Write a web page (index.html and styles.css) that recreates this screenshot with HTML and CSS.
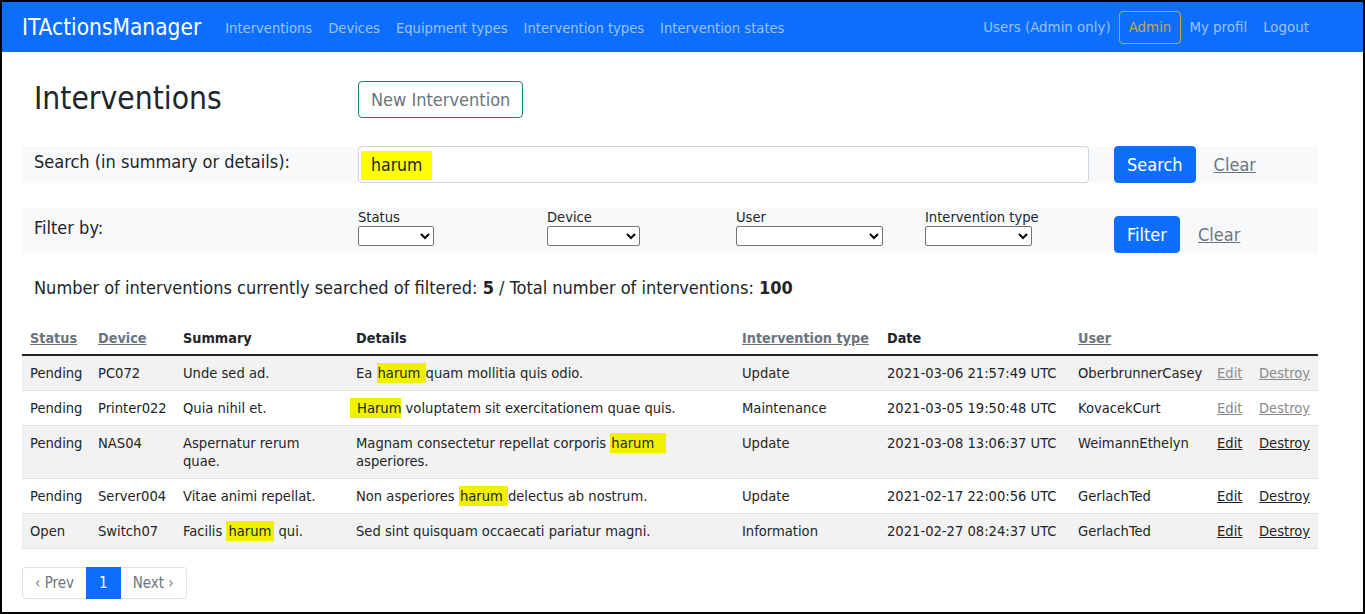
FILE: index.html
```html
<!DOCTYPE html>
<html lang="en">
<head>
<meta charset="utf-8">
<title>ITActionsManager</title>
<link rel="stylesheet" href="styles.css">
</head>
<body>
<div class="frame">
  <nav class="navbar">
    <a class="brand" href="#">ITActionsManager</a>
    <ul class="nav nav-left">
      <li><a href="#">Interventions</a></li>
      <li><a href="#">Devices</a></li>
      <li><a href="#">Equipment types</a></li>
      <li><a href="#">Intervention types</a></li>
      <li><a href="#">Intervention states</a></li>
    </ul>
    <ul class="nav nav-right">
      <li><a href="#">Users (Admin only)</a></li>
      <li><a class="admin" href="#">Admin</a></li>
      <li><a href="#">My profil</a></li>
      <li><a href="#">Logout</a></li>
    </ul>
  </nav>

  <main class="container">
    <div class="title-row">
      <h1 class="title">Interventions</h1>
      <a class="btn btn-outline-success" href="#">New Intervention</a>
    </div>

    <form class="panel search-panel">
      <div class="panel-label">Search (in summary or details):</div>
      <div class="search-field"><div class="form-control"><mark class="hl-input">harum</mark></div></div>
      <div class="actions"><button type="button" class="btn btn-primary">Search</button><a class="clear" href="#">Clear</a></div>
    </form>

    <form class="panel filter-panel">
      <div class="panel-label filter-label">Filter by:</div>
      <div class="field"><label>Status</label><select class="sel sel-status"><option></option></select></div>
      <div class="field"><label>Device</label><select class="sel sel-device"><option></option></select></div>
      <div class="field"><label>User</label><select class="sel sel-user"><option></option></select></div>
      <div class="field"><label>Intervention type</label><select class="sel sel-type"><option></option></select></div>
      <div class="actions filter-actions"><button type="button" class="btn btn-primary">Filter</button><a class="clear" href="#">Clear</a></div>
    </form>

    <p class="count">Number of interventions currently searched of filtered: <b>5</b> / Total number of interventions: <b>100</b></p>

    <table class="table">
      <colgroup>
        <col class="c-status"><col class="c-device"><col class="c-summary"><col class="c-details"><col class="c-type"><col class="c-date"><col class="c-user"><col class="c-edit"><col class="c-destroy">
      </colgroup>
      <thead>
        <tr>
          <th><a class="sort" href="#">Status</a></th>
          <th><a class="sort" href="#">Device</a></th>
          <th>Summary</th>
          <th>Details</th>
          <th><a class="sort" href="#">Intervention type</a></th>
          <th>Date</th>
          <th><a class="sort" href="#">User</a></th>
          <th></th>
          <th></th>
        </tr>
      </thead>
      <tbody>
        <tr class="odd">
          <td>Pending</td><td>PC072</td><td>Unde sed ad.</td>
          <td>Ea <mark class="hl">harum </mark>quam mollitia quis odio.</td>
          <td>Update</td><td>2021-03-06 21:57:49 UTC</td><td>OberbrunnerCasey</td>
          <td><a class="act visited" href="#">Edit</a></td><td><a class="act visited" href="#">Destroy</a></td>
        </tr>
        <tr>
          <td>Pending</td><td>Printer022</td><td>Quia nihil et.</td>
          <td><mark class="hl hl-lead">Harum</mark> voluptatem sit exercitationem quae quis.</td>
          <td>Maintenance</td><td>2021-03-05 19:50:48 UTC</td><td>KovacekCurt</td>
          <td><a class="act visited" href="#">Edit</a></td><td><a class="act visited" href="#">Destroy</a></td>
        </tr>
        <tr class="odd">
          <td>Pending</td><td>NAS04</td><td>Aspernatur rerum quae.</td>
          <td>Magnam consectetur repellat corporis <mark class="hl hl-trail">harum</mark> asperiores.</td>
          <td>Update</td><td>2021-03-08 13:06:37 UTC</td><td>WeimannEthelyn</td>
          <td><a class="act" href="#">Edit</a></td><td><a class="act" href="#">Destroy</a></td>
        </tr>
        <tr>
          <td>Pending</td><td>Server004</td><td>Vitae animi repellat.</td>
          <td>Non asperiores <mark class="hl">harum </mark>delectus ab nostrum.</td>
          <td>Update</td><td>2021-02-17 22:00:56 UTC</td><td>GerlachTed</td>
          <td><a class="act" href="#">Edit</a></td><td><a class="act" href="#">Destroy</a></td>
        </tr>
        <tr class="odd">
          <td>Open</td><td>Switch07</td><td>Facilis <mark class="hl hl-word">harum</mark> qui.</td>
          <td>Sed sint quisquam occaecati pariatur magni.</td>
          <td>Information</td><td>2021-02-27 08:24:37 UTC</td><td>GerlachTed</td>
          <td><a class="act" href="#">Edit</a></td><td><a class="act" href="#">Destroy</a></td>
        </tr>
      </tbody>
    </table>

    <ul class="pagination">
      <li><a class="page-link" href="#">&lsaquo; Prev</a></li>
      <li><a class="page-link active" href="#">1</a></li>
      <li><a class="page-link" href="#">Next &rsaquo;</a></li>
    </ul>
  </main>
</div>
</body>
</html>
```

FILE: styles.css
```css
* { box-sizing: border-box; }
html, body { margin: 0; padding: 0; }
body {
  font-family: "DejaVu Sans Condensed", "DejaVu Sans", sans-serif;
  font-stretch: condensed;
  font-size: 18px;
  color: #212529;
  background: #fff;
}
.frame {
  width: 1365px;
  height: 614px;
  border: 2px solid #000;
  overflow: hidden;
}

/* navbar */
.navbar {
  display: flex;
  align-items: center;
  height: 50px;
  background: #0d6efd;
  padding: 0 46px 0 20px;
}
.brand {
  color: #fff;
  text-decoration: none;
  font-size: 22.5px;
  margin-right: 16px;
}
.nav { list-style: none; margin: 0; padding: 0; display: flex; align-items: center; }
.nav-right { margin-left: auto; }
.nav a {
  display: block;
  padding: 8px;
  line-height: 21px;
  color: #9cc2fb;
  text-decoration: none;
  font-size: 14.6px;
}
.nav-right a { font-size: 14.9px; }
.nav a.admin {
  color: #bfa95a;
  border: 1px solid #c2a650;
  border-radius: 4px;
  padding: 5px 9px;
}

/* content */
.container { padding: 0 45px 0 20px; }
.title-row {
  display: flex;
  align-items: center;
  padding: 29px 0 28px;
}
.title {
  margin: 0;
  width: 336px;
  padding-left: 12px;
  font-weight: 400;
  font-size: 31.5px;
  line-height: 37px;
  margin-top: -2px;
}
.btn {
  display: inline-block;
  font-family: inherit;
  font-size: 18px;
  line-height: 23px;
  padding: 6px 12px;
  border-radius: 4px;
  border: 1px solid transparent;
  text-decoration: none;
  cursor: pointer;
  height: 37px;
}
.btn-outline-success { color: #6c757d; border-color: #198754; }
.btn-primary { background: #0d6efd; color: #fff; border-color: #0d6efd; }

.panel {
  display: grid;
  grid-template-columns: 336px 189px 189px 189px 189px 1fr;
  background: #f8f9fa;
  margin: 0;
}
.search-panel { height: 37px; }
.filter-panel { height: 45px; margin-top: 25px; }
.panel-label { padding: 4px 12px; line-height: 24px; }
.filter-label { padding-top: 8px; }
.search-field { grid-column: 2 / span 4; padding-right: 25px; }
.form-control {
  height: 37px;
  background: #fff;
  border: 1px solid #ced4da;
  border-radius: 4px;
  padding: 4px 2px 0;
}
.hl-input {
  display: inline-block;
  background: #ffff00;
  color: #212529;
  font-size: 17.5px;
  line-height: 29px;
  padding: 0 10px 0 10px;
}
.actions { display: flex; align-items: center; }
.filter-actions { align-items: flex-end; }
.filter-actions .clear { align-self: center; margin-top: 8px; }
.clear { color: #6c757d; text-decoration: underline; margin-left: 18px; font-size: 18px; }
.field { padding-top: 0; display: flex; flex-direction: column; align-items: flex-start; }
.field label { font-size: 14.6px; line-height: 17px; }
.sel {
  height: 20px;
  font-size: 13px;
  background: #fff;
  border: 1px solid #767676;
  border-radius: 2px;
  margin-top: 1px;
}
.sel-status { width: 76px; }
.sel-device { width: 93px; }
.sel-user { width: 147px; }
.sel-type { width: 107px; }

.count {
  margin: 23px 0 0;
  padding-left: 12px;
  font-size: 18px;
  line-height: 24px;
}
.count b { font-weight: 700; }

/* table */
.table {
  width: 1296px;
  margin-top: 24px;
  border-collapse: collapse;
  table-layout: fixed;
  font-size: 14.6px;
}
.c-status { width: 68px; }
.c-device { width: 85px; }
.c-summary { width: 173px; }
.c-details { width: 386px; }
.c-type { width: 145px; }
.c-date { width: 191px; }
.c-user { width: 139px; }
.c-edit { width: 42px; }
.c-destroy { width: 67px; }
.table th, .table td {
  text-align: left;
  vertical-align: top;
  padding: 8px;
  line-height: 18px;
}
.table th { font-weight: 700; padding-top: 5px; padding-bottom: 7px; white-space: nowrap; font-size: 14.3px; }
.table thead tr { border-bottom: 2px solid #212529; }
.table tbody tr { border-bottom: 1px solid #dee2e6; }
.table tbody tr.odd { background: #f2f2f2; }
.sort { color: #6c757d; text-decoration: underline; }
.hl { background: #f0f000; color: #212529; padding: 1px 1px 2px; }
.hl-lead { margin-left: -6px; padding-left: 7px; padding-right: 0; }
.hl-trail { padding-right: 12px; }
.hl-word { padding: 1px 3px 2px 2px; }
.act { color: #212529; text-decoration: underline; }
.act.visited { color: #8a8a8a; }

/* pagination */
.pagination {
  list-style: none;
  display: flex;
  margin: 18px 0 0;
  padding: 0;
}
.page-link {
  display: block;
  height: 32px;
  line-height: 30px;
  padding: 0 12px;
  font-size: 15px;
  color: #6c757d;
  text-decoration: none;
  border: 1px solid #dee2e6;
}
.pagination li:first-child .page-link { border-radius: 4px 0 0 4px; border-right: 0; }
.pagination li:last-child .page-link { border-radius: 0 4px 4px 0; border-left: 0; }
.page-link.active { background: #0d6efd; border-color: #0d6efd; color: #fff; }
```
